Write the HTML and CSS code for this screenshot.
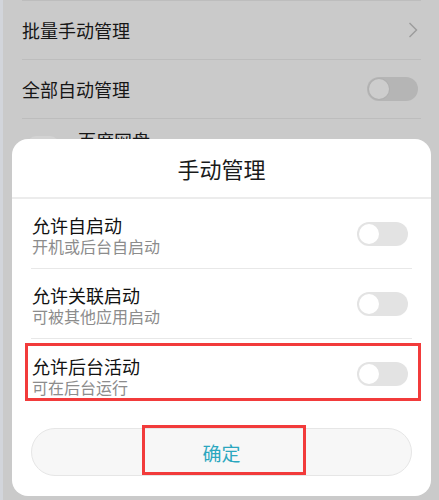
FILE: index.html
```html
<!DOCTYPE html>
<html lang="zh-CN">
<head>
    <meta charset="UTF-8">
    <meta name="viewport" content="width=device-width, initial-scale=1.0">
    <title>手动管理</title>
    <link rel="stylesheet" href="styles.css">
</head>
<body>
    <div class="list">
        <div class="list-row">
            <span>批量手动管理</span>
            <svg class="chevron" width="10" height="16" viewBox="0 0 10 16">
                <path d="M1.5 1 L8.5 8 L1.5 15" fill="none" stroke="#9b9b9b" stroke-width="1.4"/>
            </svg>
        </div>
        <div class="list-row">
            <span>全部自动管理</span>
            <div class="switch switch-dim"><div class="knob"></div></div>
        </div>
        <div class="list-row app-row">
            <div class="app-icon"></div>
            <span>百度网盘</span>
        </div>
    </div>

    <div class="sheet">
        <div class="sheet-title">手动管理</div>

        <div class="options">
            <div class="option">
                <div class="option-text">
                    <div class="option-name">允许自启动</div>
                    <div class="option-desc">开机或后台自启动</div>
                </div>
                <div class="switch"><div class="knob"></div></div>
            </div>
            <div class="option">
                <div class="option-text">
                    <div class="option-name">允许关联启动</div>
                    <div class="option-desc">可被其他应用启动</div>
                </div>
                <div class="switch"><div class="knob"></div></div>
            </div>
            <div class="option">
                <div class="option-text">
                    <div class="option-name">允许后台活动</div>
                    <div class="option-desc">可在后台运行</div>
                </div>
                <div class="switch"><div class="knob"></div></div>
            </div>
        </div>

        <div class="actions">
            <button type="button" class="confirm">确定</button>
        </div>

        <div class="mark mark-row"></div>
        <div class="mark mark-button"></div>
    </div>
</body>
</html>
```

FILE: styles.css
```css
body {
    margin: 0;
    font-family: "Noto Sans CJK SC", "Noto Sans", sans-serif;
    background-color: #cacaca;
    border-left: 3px solid #d2d5db;
    height: 500px;
    box-sizing: border-box;
    position: relative;
    overflow: hidden;
}

.list {
    margin: 0 18px 0 19px;
    border-top: 1px solid #bdbdbd;
}

.list-row {
    height: 58px;
    border-bottom: 1px solid #bdbdbd;
    display: flex;
    align-items: center;
    justify-content: space-between;
    font-size: 18px;
    color: #161616;
}

.chevron {
    margin-right: 3px;
}

.app-row {
    justify-content: flex-start;
    align-items: flex-start;
    padding-top: 8px;
}

.app-row span {
    margin-left: 19px;
}

.app-icon {
    width: 32px;
    height: 32px;
    margin-left: 5px;
    margin-top: 9px;
    border-radius: 9px;
    background-color: #d3d3d3;
}

.switch {
    width: 51px;
    height: 24px;
    border-radius: 12px;
    background-color: #e3e3e3;
    display: flex;
    align-items: center;
    padding: 0 2px;
    box-sizing: border-box;
}

.knob {
    width: 20px;
    height: 20px;
    border-radius: 50%;
    background-color: #fff;
}

.switch-dim {
    background-color: #b5b5b5;
    margin-right: 3px;
}

.switch-dim .knob {
    background-color: #cdcdcd;
    box-shadow: 0 0 0 1px #b0b0b0;
}

.sheet {
    position: absolute;
    left: 9px;
    top: 139px;
    width: 419px;
    height: 357px;
    background-color: #fff;
    border-radius: 16px;
}

.sheet-title {
    height: 58px;
    line-height: 58px;
    text-align: center;
    font-size: 22px;
    color: #1a1a1a;
    border-bottom: 2px solid #ececec;
}

.options {
    padding: 0 19px;
}

.option {
    height: 69px;
    border-bottom: 1px solid #e8e8e8;
    display: flex;
    align-items: center;
    justify-content: space-between;
    padding: 0 4px 0 1px;
}

.option:last-child {
    height: 70px;
    border-bottom: none;
}

.option-text {
    padding-top: 3px;
}

.option-name {
    font-size: 18px;
    line-height: 22px;
    color: #111;
}

.option-desc {
    font-size: 16px;
    line-height: 20px;
    color: #8c8c8c;
}

.actions {
    padding: 19px 19px 0;
}

.confirm {
    width: 100%;
    height: 48px;
    border: 1px solid #e6e6e6;
    border-radius: 24px;
    background-color: #f7f7f7;
    font-family: inherit;
    font-size: 19px;
    color: #2ba7bf;
}

.mark {
    position: absolute;
    border: 3px solid #f23b3b;
    box-sizing: border-box;
}

.mark-row {
    left: 13px;
    top: 204px;
    width: 396px;
    height: 58px;
}

.mark-button {
    left: 130px;
    top: 286px;
    width: 164px;
    height: 50px;
}
```
